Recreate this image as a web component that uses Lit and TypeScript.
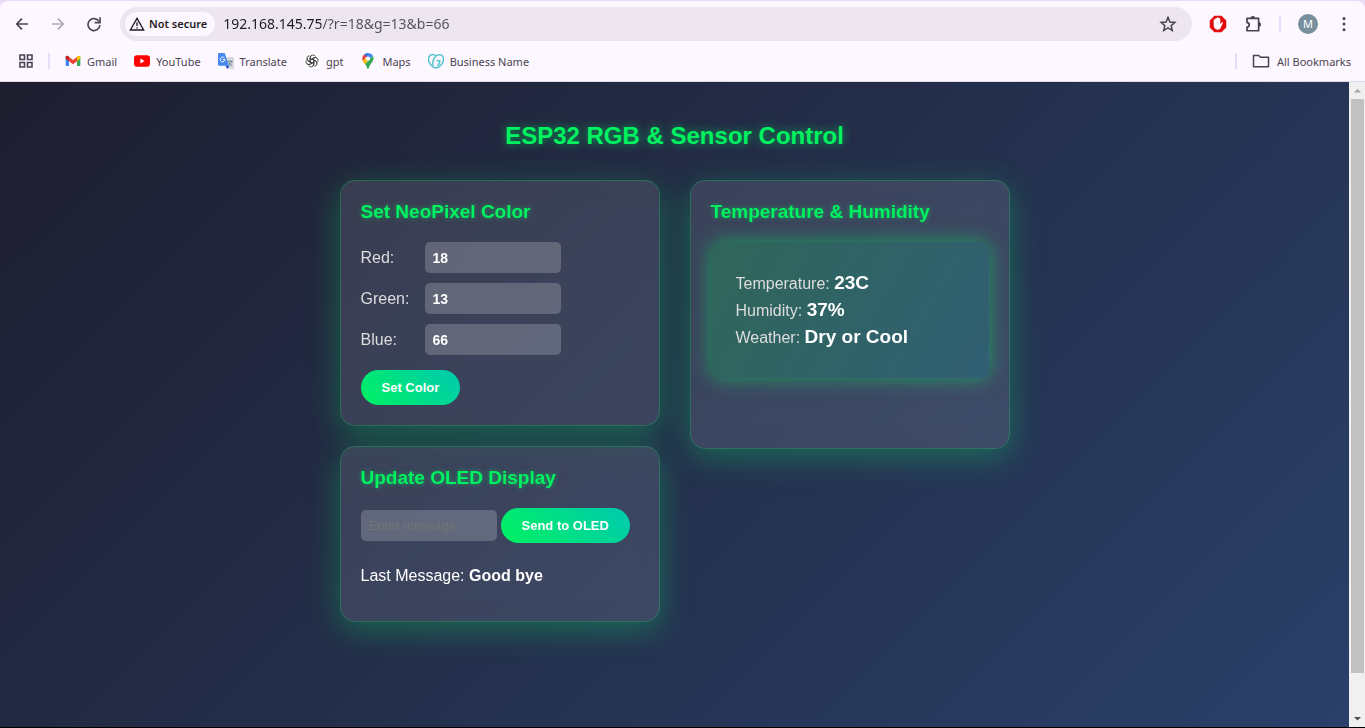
import { LitElement, html, svg, css } from "lit";
import { customElement } from "lit/decorators.js";

const icon = (size: number, body: unknown, box = 24) =>
  html`<svg width=${size} height=${size} viewBox="0 0 ${box} ${box}" aria-hidden="true">${body}</svg>`;

const ICONS = {
  back: svg`<path d="M21 12H4M12 4l-8 8 8 8" fill="none" stroke="#4b4254" stroke-width="2.4"/>`,
  forward: svg`<path d="M3 12h17M12 4l8 8-8 8" fill="none" stroke="#b0a8b6" stroke-width="2.4"/>`,
  reload: svg`<path d="M19.6 8A9 9 0 1 0 21 13.5" fill="none" stroke="#4b4254" stroke-width="2.4"/><path d="M21 2v8h-8" fill="none" stroke="#4b4254" stroke-width="2.4"/>`,
  warning: svg`<path d="M12 3.5 22 21H2z" fill="none" stroke="#1f1a24" stroke-width="2"/><path d="M12 9.5v5.5M12 16.8v2" stroke="#1f1a24" stroke-width="2"/>`,
  star: svg`<path d="m12 3.2 2.6 6.1 6.6.6-5 4.3 1.5 6.5L12 17.2l-5.7 3.5 1.5-6.5-5-4.3 6.6-.6z" fill="none" stroke="#4b4254" stroke-width="2"/>`,
  block: svg`<path d="M7.3 1h9.4L23 7.3v9.4L16.700 23H7.3L1 16.700V7.3z" fill="#e40d0d"/><path d="M6.200 13V6.800a1.100 1.100 0 0 1 2.200 0V5a1.100 1.100 0 0 1 2.200 0V4a1.100 1.100 0 0 1 2.200 0v1.200a1.100 1.100 0 0 1 2.200 0v7l1.600-2.200c.8-1 2.200-.2 1.700 1l-2.900 6.200c-.7 1.500-1.900 2.300-3.600 2.300-3.700 0-5.600-2.300-5.600-6.500z" fill="#fff"/>`,
  puzzle: svg`<path d="M4 4.500h15.500V21H4v-4.900a3 3 0 0 0 0-6z" fill="none" stroke="#4b4254" stroke-width="2.300" stroke-linejoin="round"/><path d="M9 4.500a2.800 2.800 0 0 1 5.600 0zM19.500 10a2.800 2.800 0 0 1 0 5.600z" fill="#4b4254" stroke="#4b4254"/>`,
  dots: svg`<g fill="#4b4254"><circle cx="12" cy="4.500" r="2"/><circle cx="12" cy="12" r="2"/><circle cx="12" cy="19.500" r="2"/></g>`,
  apps: svg`<path d="M2 2h4.500v4.500H2zM9.500 2H14v4.500H9.500zM2 9.500h4.500V14H2zM9.500 9.500H14V14H9.500z" fill="none" stroke="#4b4254" stroke-width="1.600"/>`,
  folder: svg`<path d="M2 4.500h7l2.200 2.500H22v12.500H2z" fill="none" stroke="#4b4254" stroke-width="2" stroke-linejoin="round"/>`,
  gmail: svg`<path d="M1 4.500V18a1.500 1.500 0 0 0 1.500 1.500H6V9z" fill="#4285f4"/><path d="M23 4.500V18a1.500 1.500 0 0 1-1.500 1.500H18V9z" fill="#34a853"/><path d="M6 6v6.500l6 4.500 6-4.500V6l-6 4.500z" fill="#ea4335"/><path d="M1 6.500c0-2.700 2.600-3 4-2l1 .8v7.200L1 8.700z" fill="#c5221f"/><path d="M23 6.500c0-2.700-2.600-3-4-2l-1 .8v7.200l5-3.800z" fill="#fbbc04"/>`,
  youtube: svg`<rect x="0" y="3.500" width="24" height="17" rx="4.500" fill="#f00"/><path d="m9.600 8.300 6.300 3.700-6.300 3.700z" fill="#fff"/>`,
  translate: svg`<path d="M9 6h13.500A1.500 1.500 0 0 1 24 7.500v15a1.500 1.500 0 0 1-1.500 1.500H14z" fill="#d5d8dc"/><path d="M14 12.500h8M18 11v1.500M20.800 12.500c-.8 3-2.800 5-5 6.300M16 14c1 2.200 3 4 5 5" fill="none" stroke="#607d8b" stroke-width="1.300"/><path d="m11 19 3 5 3.300-5z" fill="#3348c0"/><path d="M1.500 0H10l6.500 19h-15A1.500 1.500 0 0 1 0 17.500v-16A1.500 1.500 0 0 1 1.500 0z" fill="#4688f1"/><path d="M9.600 7.300A3.600 3.600 0 1 0 10.500 10H7.200" fill="none" stroke="#fff" stroke-width="1.500"/>`,
  gpt: svg`<rect width="24" height="24" rx="5" fill="#fff"/><g fill="none" stroke="#333" stroke-width="1.300">${[0, 60, 120, 180, 240, 300].map(
    (a) => svg`<path transform="rotate(${a} 12 12)" d="M9.300 13.600V7a4.200 4.200 0 0 1 7.600-2.200M9.300 10.300l5.200-3a4.300 4.300 0 0 1 4.300 0"/>`
  )}</g>`,
  maps: svg`<path d="M12 0a8.500 8.500 0 0 0-6.500 3l6 5z" fill="#1a73e8"/><path d="M5.500 3a8.500 8.500 0 0 0-1.300 9l7-8z" fill="#ea4335"/><path d="M12 0a8.500 8.500 0 0 1 7.400 4.300L13 11 9.500 6z" fill="#4285f4"/><path d="M9 7 4.200 12c.8 1.800 2 3.200 3.300 5l7-8z" fill="#fbbc04"/><path d="M19.400 4.300c3 6.200-1.800 9.700-4.400 13.700-1.500 2.300-1.400 6-3 6s-1.600-3.600-3-5.500L7.500 17z" fill="#34a853"/><circle cx="12" cy="8.400" r="3.300" fill="#fff"/>`,
  godaddy: svg`<g fill="none" stroke="#4fc5cb" stroke-width="2.200"><path d="M12.400 4.700C9 1 3.800 1.600 1.800 5.100c-2.800 4.800.2 12.600 6 16 2.500 1.400 5.900 1.400 8.400 0 5.800-3.400 8.800-11.200 6-16C19.300.300 11.500 2.500 8.600 9c-1.500 3.400-1.700 6.800-.8 9.600"/><path d="M13 11.500h4.800c0 3-1.200 5.800-3.600 8"/></g>`,
};

@customElement("browser-bar")
class BrowserBar extends LitElement {
  static styles = css`
    :host { display: block; background: #eadcf8; padding-top: 1px; font-family: "Noto Sans", "Open Sans", sans-serif; color: #4a4452; }
    .chrome { background: #fdf7ff; border-radius: 8px 8px 0 0; border-bottom: 1px solid #e2dae6; }
    .row { display: flex; align-items: center; }
    .nav { height: 45px; padding: 0 12px; }
    .marks { height: 35px; padding: 0 14px 5px 18px; box-sizing: border-box; }
    button, a { display: flex; align-items: center; justify-content: center; border: 0; padding: 0; background: none; color: inherit; text-decoration: none; font: inherit; flex: none; }
    .tool { width: 20px; height: 20px; margin-right: 16px; }
    .omni { flex: 1; height: 34px; border-radius: 17px; background: #ede6f0; padding: 0 15px 0 5px; display: flex; align-items: center; min-width: 0; }
    .chip { height: 24px; border-radius: 12px; background: #fdf7ff; padding: 0 8px 0 4px; gap: 4px; font-size: 11px; font-weight: 600; color: #1f1a24; }
    .url { flex: 1; min-width: 0; border: 0; outline: 0; font: 14px "Noto Sans", sans-serif; color: transparent; padding: 0 8px; background: linear-gradient(90deg, #1f1a24 106px, #544d5a 106px); -webkit-background-clip: text; background-clip: text; }
    .actions { display: flex; align-items: center; gap: 17px; margin-left: 17px; }
    .sep { width: 2px; height: 16px; background: #eadcf8; }
    .avatar { width: 20px; height: 20px; border-radius: 50%; background: #78909c; color: #fff; font-size: 11px; }
    .mark { gap: 6px; font-size: 11px; margin-right: 17px; white-space: nowrap; }
    .marks .sep { margin: 0 15px 0 14px; }
    .fill { flex: 1; }
    .all { gap: 7px; font-size: 11px; }
  `;

  render() {
    const marks: [string, unknown][] = [
      ["Gmail", ICONS.gmail], ["YouTube", ICONS.youtube], ["Translate", ICONS.translate],
      ["gpt", ICONS.gpt], ["Maps", ICONS.maps], ["Business Name", ICONS.godaddy],
    ];
    return html`<div class="chrome">
      <div class="row nav">
        <button class="tool" aria-label="Back">${icon(16, ICONS.back)}</button>
        <button class="tool" aria-label="Forward">${icon(16, ICONS.forward)}</button>
        <button class="tool" aria-label="Reload">${icon(16, ICONS.reload)}</button>
        <div class="omni">
          <button class="chip">${icon(16, ICONS.warning)}Not secure</button>
          <input class="url" aria-label="Address" .value=${"192.168.145.75/?r=18&g=13&b=66"} />
          <button aria-label="Bookmark this page">${icon(18, ICONS.star)}</button>
        </div>
        <div class="actions">
          <button aria-label="Ad blocker">${icon(18, ICONS.block)}</button>
          <button aria-label="Extensions">${icon(18, ICONS.puzzle)}</button>
          <span class="sep"></span>
          <button class="avatar" aria-label="Profile">M</button>
          <button aria-label="Menu">${icon(18, ICONS.dots)}</button>
        </div>
      </div>
      <div class="row marks">
        <button aria-label="Apps">${icon(16, ICONS.apps, 16)}</button>
        <span class="sep"></span>
        ${marks.map(([name, glyph]) => html`<a class="mark" href="#">${icon(16, glyph)}${name}</a>`)}
        <span class="fill"></span>
        <span class="sep"></span>
        <button class="all">${icon(18, ICONS.folder)}All Bookmarks</button>
      </div>
    </div>`;
  }
}

@customElement("sensor-page")
class SensorPage extends LitElement {
  static styles = css`
    :host { display: block; box-sizing: border-box; padding: 40px 20px; color: #fff; font: 16px/18px "Liberation Sans", Arial, sans-serif; background: linear-gradient(135deg, #1e1e2f, #2a4069); overflow: hidden; }
    h1, h2, p, form { margin: 0; }
    h1 { font-size: 24px; line-height: 28px; text-align: center; color: #00f260; text-shadow: 0 0 10px rgba(0, 242, 96, 0.6); }
    h2 { font-size: 19px; line-height: 22px; color: #00f260; text-shadow: 0 0 5px rgba(0, 242, 96, 0.5); margin-bottom: 19px; }
    .layout { display: flex; flex-wrap: wrap; justify-content: center; align-items: flex-start; gap: 30px; margin-top: 30px; }
    .column { display: flex; flex-direction: column; gap: 20px; width: 320px; }
    .card { box-sizing: border-box; padding: 20px; border: 1px solid rgba(0, 242, 96, 0.24); border-radius: 15px; background: rgba(255, 255, 255, 0.11); box-shadow: 0 8px 32px rgba(0, 242, 96, 0.3); backdrop-filter: blur(10px); }
    .field { display: grid; grid-template-columns: 64px 136px; align-items: center; margin-bottom: 10px; color: #ddd; }
    input { box-sizing: border-box; width: 136px; height: 31px; padding: 0 8px; border: 0; border-radius: 5px; background: rgba(255, 255, 255, 0.2); color: #fff; font: bold 14px "Liberation Sans", Arial, sans-serif; }
    .message { font-weight: normal; font-size: 13px; }
    .message::placeholder { color: #757575; }
    .pill { height: 35px; padding: 0 21px; border: 0; border-radius: 20px; background: linear-gradient(45deg, #00f260, #00c9b1); color: #fff; font: bold 13px "Liberation Sans", Arial, sans-serif; white-space: nowrap; }
    .set { margin-top: 5px; }
    .send { display: flex; align-items: center; gap: 4px; margin-bottom: 24px; }
    .last { padding-bottom: 16px; }
    .sensor { padding-bottom: 70px; }
    .readings { padding: 27px 25px 28px; line-height: 27px; border-radius: 10px; background: linear-gradient(120deg, #2f6659, #315f74); box-shadow: 0 0 20px rgba(0, 242, 96, 0.5); color: #ddd; }
    .readings p { height: 27px; }
    .readings strong { font-size: 19px; color: #fff; }
  `;

  render() {
    const channels: [string, string][] = [["Red", "18"], ["Green", "13"], ["Blue", "66"]];
    const readings: [string, string][] = [["Temperature", "23C"], ["Humidity", "37%"], ["Weather", "Dry or Cool"]];
    return html`<h1>ESP32 RGB &amp; Sensor Control</h1>
      <div class="layout">
        <div class="column">
          <section class="card">
            <h2>Set NeoPixel Color</h2>
            <form @submit=${(e: Event) => e.preventDefault()}>
              ${channels.map(([name, value]) => html`<div class="field"><label for=${name}>${name}:</label><input id=${name} .value=${value} /></div>`)}
              <button class="pill set">Set Color</button>
            </form>
          </section>
          <section class="card">
            <h2>Update OLED Display</h2>
            <form class="send" @submit=${(e: Event) => e.preventDefault()}>
              <input class="message" aria-label="Message" placeholder="Enter message" />
              <button class="pill">Send to OLED</button>
            </form>
            <p class="last">Last Message: <strong>Good bye</strong></p>
          </section>
        </div>
        <div class="column">
          <section class="card sensor">
            <h2>Temperature &amp; Humidity</h2>
            <div class="readings">${readings.map(([name, value]) => html`<p>${name}: <strong>${value}</strong></p>`)}</div>
          </section>
        </div>
      </div>`;
  }
}

@customElement("app-root")
class AppRoot extends LitElement {
  static styles = css`
    :host { display: flex; flex-direction: column; height: 100vh; box-sizing: border-box; border-bottom: 1px solid #000; }
    .view { flex: 1; min-height: 0; display: flex; }
    sensor-page { flex: 1; min-width: 0; }
    .scroll { width: 16px; box-sizing: border-box; padding: 0 1px 0 2px; display: flex; flex-direction: column; align-items: center; background: #f0f0f0; }
    .cap { height: 17px; flex: none; display: flex; align-items: center; }
    .track { flex: 1; width: 100%; }
    .thumb { height: 94%; background: #c1c1c1; }
  `;

  render() {
    return html`<browser-bar></browser-bar>
      <div class="view">
        <sensor-page></sensor-page>
        <div class="scroll">
          <span class="cap">${icon(7, svg`<path d="M0 5.500 3.500 2 7 5.500z" fill="#a3a3a3"/>`, 7)}</span>
          <div class="track"><div class="thumb"></div></div>
          <span class="cap">${icon(7, svg`<path d="M0 2l3.500 3.500L7 2z" fill="#505050"/>`, 7)}</span>
        </div>
      </div>`;
  }
}
